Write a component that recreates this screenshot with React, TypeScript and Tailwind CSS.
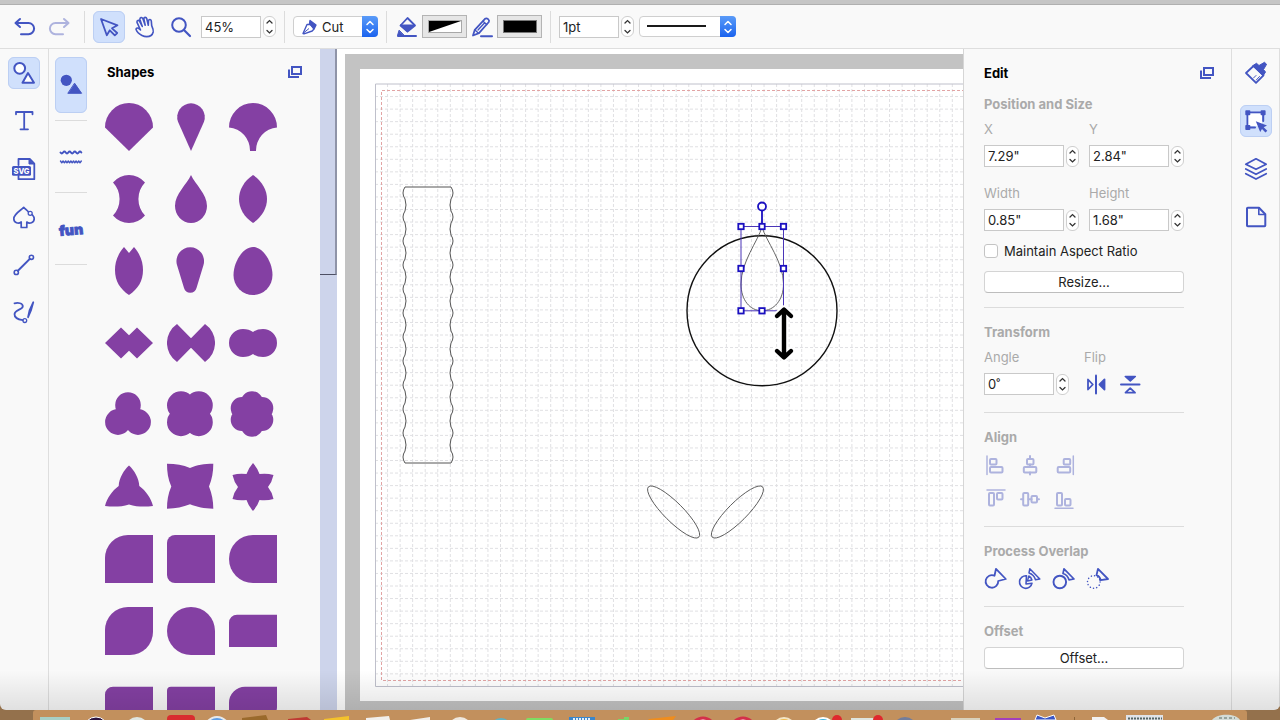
import type { ReactNode } from "react";
import { useState } from "react";

const CELL = 12.55;
const MAT = { x: 375, y: 84, bottom: 686.5, right: 1400 };

const verticals = Array.from({ length: 80 }, (_, i) => MAT.x + (i + 1) * CELL);
const horizontals = Array.from({ length: 47 }, (_, i) => MAT.y + (i + 1) * CELL);

// Joins several circles into one path: [cx, cy, r]
const circles = (list: number[][]) =>
  list.map(([cx, cy, r]) => `M${cx - r} ${cy}a${r} ${r} 0 1 1 ${2 * r} 0a${r} ${r} 0 1 1 ${-2 * r} 0Z`).join("");

const shapes: { name: string; d: string }[] = [
  { name: "Fan", d: "M0 24.5A24 24.5 0 0 1 48 24.5L24 48Z" },
  { name: "Cone", d: "M11 18.8A13.8 13.8 0 1 1 37 18.8L24 48Z" },
  { name: "Umbrella", d: "M0 24.5A24 24.5 0 0 1 48 24.5A23 23 0 0 0 27 48H21A23 23 0 0 0 0 24.5Z" },
  { name: "Spool", d: "M8 7.5A21 21 0 0 1 40 7.5A24 24 0 0 0 40 40.5A21 21 0 0 1 8 40.5A24 24 0 0 0 8 7.5Z" },
  { name: "Drop", d: "M24 0C28 9 40 19 40 31A16 17 0 0 1 8 31C8 19 20 9 24 0Z" },
  { name: "Leaf", d: "M24 0C33 6 38 15 38 24S33 42 24 48C15 42 10 33 10 24S15 6 24 0Z" },
  { name: "Petal", d: "M19 0L24 6L29 0C36 8 38 16 38 23C38 34 33 42 24 48C15 42 10 34 10 23C10 16 12 8 19 0Z" },
  { name: "Taper", d: "M10 18A13.8 13.8 0 1 1 36.5 18L29.5 41A6.5 6.5 0 0 1 17 41Z" },
  { name: "Egg", d: "M24 0C34 0 43.5 15 43.5 28A19.5 20 0 0 1 4.5 28C4.5 15 14 0 24 0Z" },
  { name: "Double diamond", d: "M0 24L16 8.5L24 16.3L32 8.5L48 24L32 39.5L24 31.7L16 39.5Z" },
  { name: "Bow", d: "M10 5L24 19.3L38 5A23 23 0 0 1 38 43L24 28.7L10 43A23 23 0 0 1 10 5Z" },
  { name: "Double circle", d: "M14 10Q20 10 24 13Q28 10 34 10A14 14 0 0 1 34 38Q28 38 24 35Q20 38 14 38A14 14 0 0 1 14 10Z" },
  { name: "Trefoil", d: circles([[23, 14, 12.8], [13, 31, 12.9], [33, 31, 12.9]]) },
  { name: "Quatrefoil", d: circles([[14, 14.3, 14], [31.8, 14.3, 14], [14, 31.2, 14], [31.8, 31.2, 14]]) },
  { name: "Flower", d: circles([[23, 11.4, 11.2], [23, 34.6, 11.2], [12.9, 17.2, 11.2], [33.1, 17.2, 11.2], [12.9, 28.8, 11.2], [33.1, 28.8, 11.2], [23, 23, 12]]) },
  { name: "Tri star", d: "M24 2.5C29 7 34 15 34.3 23C41 28 46 35 48 43C40 44 32 44 24 41.5C16 44 8 44 0 43C2 35 7 28 13.7 23C14 15 19 7 24 2.5Z" },
  { name: "Four star", d: "M0 .7C9 .7 16 2 23 5C30 2 37 .7 46.3 .7C46.3 9 45 16 42 23.5C45 31 46.3 38 46.3 45.7C37 45.7 30 44 23 41.3C16 44 9 45.7 0 45.7C0 38 1 31 4.3 23.5C1 16 0 9 0 .7Z" },
  { name: "Six star", d: "M24 0Q28.5 5 30.5 11Q38 10 44.5 12Q43 19 39 24Q43 29 44.5 36Q38 38 30.5 37Q28.5 43 24 48Q19.5 43 17.5 37Q10 38 3.5 36Q5 29 9 24Q5 19 3.5 12Q10 10 17.5 11Q19.5 5 24 0Z" },
  { name: "One round corner", d: "M0 48V23A23 23 0 0 1 23 0H48V48Z" },
  { name: "Two round corners", d: "M8 0H48V48H8A8 8 0 0 1 0 40V8A8 8 0 0 1 8 0Z" },
  { name: "Round side", d: "M24 0H48V48H24A24 24 0 0 1 24 0Z" },
  { name: "Round diagonal", d: "M0 48V23A23 23 0 0 1 23 0H48V25A23 23 0 0 1 25 48Z" },
  { name: "Three round corners", d: "M24 0A24 24 0 0 1 48 24V48H24A24 24 0 0 1 24 0Z" },
  { name: "Rectangle", d: "M8 7.7H48V40H0V15.7A8 8 0 0 1 8 7.7Z" },
  { name: "Wide round corner", d: "M8 7.7H48V40H0V15.7A8 8 0 0 1 8 7.7Z" },
  { name: "Wide small corner", d: "M4 7.7H48V40H0V11.7A4 4 0 0 1 4 7.7Z" },
  { name: "Wide large corner", d: "M16 7.7H48V28A12 12 0 0 1 36 40H0V23.7A16 16 0 0 1 16 7.7Z" },
];

// Wavy long edges of the strip, both ends bulge outwards
const waveDown = Array.from({ length: 23 }, (_, i) => `q${i % 2 === 0 ? -4 : 2} 6 0 12`).join("");
const waveUp = Array.from({ length: 23 }, (_, i) => `q${i % 2 === 0 ? 4 : -2} -6 0 -12`).join("");
const stripPath = `M405 187${waveDown}H451${waveUp}Z`;

const handles = [
  [741, 226.5], [762, 226.5], [783.5, 226.5],
  [741, 268.5], [783.5, 268.5],
  [741, 310.8], [762, 310.8],
];

const Icon = ({ w = 32, h = 32, children }: { w?: number; h?: number; children: ReactNode }) => (
  <svg
    width={w}
    height={h}
    viewBox={`0 0 ${w} ${h}`}
    fill="none"
    stroke="currentColor"
    strokeWidth="2"
    strokeLinecap="round"
    strokeLinejoin="round"
    aria-hidden="true"
  >
    {children}
  </svg>
);

const ToolButton = ({ label, active, faded, tall, children }: { label: string; active?: boolean; faded?: boolean; tall?: boolean; children: ReactNode }) => (
  <button
    aria-label={label}
    className={`flex w-8 shrink-0 items-center justify-center rounded-md ${tall ? "h-14" : "h-8"} ${
      active ? "bg-[#d0e0fc] outline outline-1 -outline-offset-1 outline-[#bccff3]" : ""
    } ${faded ? "text-[#aeb3de]" : "text-[#4355c2]"}`}
  >
    {children}
  </button>
);

const SmallButton = ({ label, faded, children }: { label: string; faded?: boolean; children: ReactNode }) => (
  <button aria-label={label} className={`h-6 w-6 ${faded ? "text-[#aeb3de]" : "text-[#4355c2]"}`}>
    <Icon w={24} h={24}>{children}</Icon>
  </button>
);

const Stepper = ({ label }: { label: string }) => (
  <div className="flex h-[21px] w-[13px] shrink-0 flex-col overflow-hidden rounded-md border border-[#cfcfcf] bg-white text-[#333]">
    {["M3 6L5.5 3.6L8 6", "M3 3.5L5.5 5.9L8 3.5"].map((d, i) => (
      <button key={d} aria-label={`${i ? "Decrease" : "Increase"} ${label}`} className="flex-1">
        <svg width="11" height="9" viewBox="0 0 11 9" fill="none" stroke="currentColor" strokeWidth="1.3" strokeLinecap="round">
          <path d={d} />
        </svg>
      </button>
    ))}
  </div>
);

const field = "h-[22px] min-w-0 border border-[#c9c9c9] bg-white px-[3px] text-[#222] outline-none";

const NumberField = ({ id, label, value }: { id: string; label: string; value: string }) => (
  <div className="w-[95px]">
    <label htmlFor={id} className="block text-[#aaa]">{label}</label>
    <div className="mt-[6px] flex items-center gap-[2px]">
      <input id={id} defaultValue={value} className={`${field} w-20`} />
      <Stepper label={label} />
    </div>
  </div>
);

const Chevrons = () => (
  <span className="pointer-events-none absolute inset-y-0 right-0 flex w-4 items-center justify-center rounded-r bg-gradient-to-b from-[#5a9bf8] to-[#1a62ee]">
    <svg width="10" height="16" viewBox="0 0 10 16" fill="none" stroke="white" strokeWidth="1.5" strokeLinecap="round" strokeLinejoin="round">
      <path d="M2 5.5L5 2.5L8 5.5M2 10.5L5 13.5L8 10.5" />
    </svg>
  </span>
);

const Divider = () => <div className="mx-2 h-8 w-px shrink-0 bg-[#dcdcdc]" />;

const PopOut = ({ label }: { label: string }) => (
  <button aria-label={label} className="text-[#4355c2]">
    <svg width="14" height="12" viewBox="0 0 14 12" fill="none" stroke="currentColor">
      <rect x="4" y="1" width="9" height="7" strokeWidth="2" />
      <path d="M1 3.5V11H11" strokeWidth="2" />
    </svg>
  </button>
);

const Toolbar = () => (
  <header className="flex h-11 shrink-0 items-center border-b border-[#dedede] bg-[#f9f9f9] pl-2">
    <div className="flex items-center gap-1">
      <ToolButton label="Undo">
        <Icon><path d="M12 8L7.5 12L12 16M8 12H20.5a5.6 5.6 0 0 1 0 11.2H13" /></Icon>
      </ToolButton>
      <ToolButton label="Redo" faded>
        <Icon><path d="M20 8L24.5 12L20 16M24 12H11.5a5.6 5.6 0 0 0 0 11.2H19" /></Icon>
      </ToolButton>
    </div>
    <Divider />
    <div className="flex items-center gap-1">
      <ToolButton label="Select" active>
        <Icon><path strokeWidth="1.8" d="M8 8L24.5 14.3L19 17.3L24.2 22L21.8 24.4L16.8 19.3L13.8 24.3Z" /></Icon>
      </ToolButton>
      <ToolButton label="Pan">
        <Icon>
          <path strokeWidth="1.6" d="M13 24.5C10 23 7.7 20.5 7 18.3C7 16.8 8.8 16.6 10 17.6L11.5 19L8 11.3C7.6 9.5 9.8 8.7 10.6 10.3L13.3 15.5L10.9 8.4C10.7 6.4 13 5.9 13.8 7.6L16.2 14.2L14.8 7.7C15 5.9 17.3 6 17.8 7.7L19.3 14.3L19.5 9.5C20 7.9 22.1 8.2 22.3 9.9L22.7 14.6C24 17.5 24.6 19 24.2 21C23.4 24.2 20.6 25.6 17.8 25.6C16 25.6 14.4 25.2 13 24.5Z" />
        </Icon>
      </ToolButton>
      <ToolButton label="Zoom">
        <Icon><circle cx="14" cy="14" r="6.8" /><path d="M19 19L25 25" strokeWidth="2.2" /></Icon>
      </ToolButton>
      <div className="flex items-center gap-[2px]">
        <input aria-label="Zoom level" defaultValue="45%" className={`${field} w-[60px]`} />
        <Stepper label="zoom" />
      </div>
    </div>
    <Divider />
    <div className="relative h-[21px] w-[85px]">
      <select aria-label="Operation" className="h-full w-full appearance-none rounded border border-[#cfcfcf] bg-white pl-7 text-[#222] outline-none">
        <option>Cut</option>
        <option>Draw</option>
      </select>
      <svg width="18" height="18" viewBox="0 0 18 18" fill="none" stroke="#4355c2" strokeWidth="1.4" strokeLinejoin="round" className="pointer-events-none absolute left-2 top-[2px]">
        <path d="M2 15.5L6 6.5H9.5L13 11L11.2 13L3 15.8Z" />
        <path d="M2.5 15L8 10.5" strokeWidth="1" />
        <path d="M9 2.5L15 7L13.2 10.6L8.5 5.5Z" fill="#4355c2" />
      </svg>
      <Chevrons />
    </div>
    <Divider />
    <div className="flex items-center gap-[3px]">
      <button aria-label="Fill colour" className="h-6 w-6 text-[#4355c2]">
        <Icon w={24} h={24}>
          <path d="M12.5 3L20 10.5L12.5 16.5L5.5 10.5Z" strokeWidth="1.8" />
          <path d="M5.5 10H20L12.5 16.5Z" fill="currentColor" strokeWidth="1" />
          <path d="M3 21H21" /><path d="M4 15.5L2.5 20.5H9Z" fill="currentColor" strokeWidth="1" />
        </Icon>
      </button>
      <button aria-label="Fill swatch" className="flex h-[23px] w-[45px] items-center justify-center border border-[#b4b4b4] bg-[#e6e6e6]">
        <svg width="34" height="13" viewBox="0 0 34 13">
          <rect width="34" height="13" fill="#a8a8a8" /><path d="M1 1H33V12H1Z" fill="white" /><path d="M1 12V1H33Z" fill="black" />
        </svg>
      </button>
      <button aria-label="Line colour" className="h-6 w-6 text-[#4355c2]">
        <Icon w={24} h={24}>
          <path d="M3 20.5L4.8 14.8L15 3.8C17 2.5 20 5 18.8 7L9 18.2Z" strokeWidth="1.8" />
          <path d="M5 15L8.5 18.3M13 6.2L16.8 9.5M8 15L14 8.5" strokeWidth="1.3" /><path d="M11 21.2H22" />
        </Icon>
      </button>
      <button aria-label="Line swatch" className="flex h-[23px] w-[45px] items-center justify-center border border-[#b4b4b4] bg-[#e6e6e6]">
        <span className="h-[13px] w-[34px] border border-[#777] bg-black" />
      </button>
    </div>
    <Divider />
    <div className="flex items-center gap-[2px]">
      <input aria-label="Line width" defaultValue="1pt" className={`${field} w-[60px]`} />
      <Stepper label="line width" />
    </div>
    <div className="relative ml-[5px] h-[21px] w-[97px]">
      <select aria-label="Line style" className="h-full w-full appearance-none rounded border border-[#cfcfcf] bg-white outline-none">
        <option value="solid" />
      </select>
      <span className="pointer-events-none absolute left-2 top-[9px] h-[2px] w-[59px] bg-[#1a1a1a]" />
      <Chevrons />
    </div>
  </header>
);

const LeftTools = () => (
  <nav aria-label="Tools" className="flex w-[49px] shrink-0 flex-col items-center gap-4 border-r border-[#dedede] pt-2">
    <ToolButton label="Shapes" active>
      <Icon><circle cx="11.7" cy="11.3" r="5.4" fill="white" /><path d="M20 16L26 25.7H14.5Z" fill="white" /></Icon>
    </ToolButton>
    <ToolButton label="Text">
      <Icon><path strokeWidth="1.8" d="M8 9.3V7H24.5V9.3M16.2 7V24.3M12.5 24.3H20" /></Icon>
    </ToolButton>
    <ToolButton label="SVG import">
      <Icon>
        <path strokeWidth="1.8" d="M10.5 12V6H22L26.3 10.5V26.2H10.5V23" /><path d="M21 6.5V11H26Z" fill="currentColor" strokeWidth="1" />
        <rect x="4" y="13" width="19" height="9.7" rx="1.5" fill="currentColor" stroke="none" />
        <text x="13.5" y="20.6" textAnchor="middle" fontSize="7.5" fontWeight="800" fill="white" stroke="none">SVG</text>
      </Icon>
    </ToolButton>
    <ToolButton label="Edit points">
      <Icon>
        <path d="M20.2 10.7C18.5 9 17 7.7 15.7 6.3C13 9.6 5.8 12.5 5.8 17.8C5.8 21.7 10.5 23.2 13.2 21V26.5H18.8V21C21.5 23.2 26.2 21.7 26.2 17.8C26.2 16.3 25.4 15 24.3 13.8" strokeWidth="1.7" />
        <circle cx="22.2" cy="12.3" r="2" strokeWidth="1.3" />
      </Icon>
    </ToolButton>
    <ToolButton label="Line">
      <Icon><circle cx="23.4" cy="8.3" r="2.1" strokeWidth="1.6" /><circle cx="8.3" cy="23.4" r="2.1" strokeWidth="1.6" /><path d="M21.8 9.9L9.9 21.8" /></Icon>
    </ToolButton>
    <ToolButton label="Freehand">
      <Icon>
        <path strokeWidth="1.8" d="M6.5 6.3C10 5.5 14.8 6 14.8 9.2C14.8 12.8 7 12.5 6.5 17C6.3 21.5 11 22.6 14.8 23.2" />
        <circle cx="16.8" cy="23.6" r="1.9" strokeWidth="1.3" />
        <path d="M25.3 5.2L23 13.5L20 20.3L21.6 13Z" strokeWidth="1.7" fill="currentColor" />
      </Icon>
    </ToolButton>
  </nav>
);

const ShapeCategories = () => (
  <nav aria-label="Shape categories" className="flex shrink-0 flex-col pl-[6px] pt-2">
    <ToolButton label="Basic shapes" active tall>
      <Icon h={56}>
        <circle cx="11.3" cy="23.3" r="5.6" fill="currentColor" stroke="none" />
        <path d="M19.8 26.5L26.6 36.3H13.2Z" fill="currentColor" strokeWidth="1" />
      </Icon>
    </ToolButton>
    <div className="mb-2 mt-[7px] h-px bg-[#dcdcdc]" />
    <ToolButton label="Borders" tall>
      <Icon h={56}>
        <path strokeWidth="2" d="M5.5 23.5q1.3 1.8 2.6 0t2.6 0t2.6 0t2.6 0t2.6 0t2.6 0t2.6 0t2.6 0" />
        <path strokeWidth="1.4" d="M5.5 32l1.3 1.8l1.3-1.8l1.3 1.8l1.3-1.8l1.3 1.8l1.3-1.8l1.3 1.8l1.3-1.8l1.3 1.8l1.3-1.8l1.3 1.8l1.3-1.8l1.3 1.8l1.3-1.8l1.3 1.8l1.3-1.8" />
      </Icon>
    </ToolButton>
    <div className="mb-2 mt-[7px] h-px bg-[#dcdcdc]" />
    <ToolButton label="Fun shapes" tall>
      <svg width="32" height="56" viewBox="0 0 32 56" fill="currentColor" stroke="currentColor" strokeWidth=".8">
        <text x="16" y="34" textAnchor="middle" fontSize="14" fontWeight="900" transform="rotate(-5 16 29)">fun</text>
      </svg>
    </ToolButton>
    <div className="mt-[7px] h-px bg-[#dcdcdc]" />
  </nav>
);

const ShapesPanel = () => (
  <section className="flex w-[233px] shrink-0 flex-col overflow-hidden pl-[18px] pt-[13px]">
    <div className="flex items-center justify-between pl-[2px] pr-[18px]">
      <h2 className="font-bold text-black">Shapes</h2>
      <PopOut label="Detach shapes panel" />
    </div>
    <div className="mt-[21px] grid w-[172px] grid-cols-3 gap-x-[14px] gap-y-6">
      {shapes.map((s) => (
        <button key={s.name} aria-label={s.name} className="h-12 w-12">
          <svg width="48" height="48" viewBox="0 0 48 48" fill="#8440a3"><path d={s.d} /></svg>
        </button>
      ))}
    </div>
  </section>
);

const Canvas = () => (
  <main className="flex min-w-0 flex-1 flex-col overflow-hidden bg-white pl-2 pt-[5px]">
    <div className="flex-1 bg-[#c3c3c3] pb-[9px] pl-[15px] pt-[15px]">
      <div className="bg-white">
        <svg className="block h-[632px] w-full" fill="none">
          <g transform="translate(-360 -69)">
            <g stroke="#e0e0e3" strokeDasharray="3 2">
              {verticals.map((x) => <path key={x} d={`M${x} ${MAT.y}V${MAT.bottom}`} />)}
              {horizontals.map((y) => <path key={y} d={`M${MAT.x} ${y}H${MAT.right}`} />)}
            </g>
            <path d={`M${MAT.right} 84H375.5V${MAT.bottom}H${MAT.right}`} stroke="#bfc0cb" />
            <path d={`M${MAT.right} 90.5H381.5V680.5H${MAT.right}`} stroke="#e2a4a4" strokeDasharray="3 2" />

            <path d={stripPath} stroke="#555" />
            <g stroke="#555" strokeWidth="0.9">
              <ellipse cx="673.6" cy="512" rx="35.6" ry="9.5" transform="rotate(45 673.6 512)" />
              <ellipse cx="737.4" cy="512" rx="35.6" ry="9.5" transform="rotate(-45 737.4 512)" />
            </g>
            <circle cx="762" cy="310.8" r="75" stroke="#111" strokeWidth="1.4" />
            <path d="M762 227C766 241 783.5 262 783.5 284C783.5 300 774 310.8 762 310.8S741 300 741 284C741 262 758 241 762 227Z" stroke="#555" strokeWidth="0.9" />

            {/* selection box */}
            <rect x="741" y="226.5" width="42.5" height="84.3" stroke="#4a35b8" />
            <path d="M762 226.5V210" stroke="#1a0fc0" strokeWidth="1.8" />
            <circle cx="762" cy="206.5" r="4" fill="white" stroke="#1a0fc0" strokeWidth="1.8" />
            {handles.map(([x, y]) => (
              <rect key={`${x}-${y}`} x={x - 2.7} y={y - 2.7} width="5.4" height="5.4" fill="white" stroke="#1a0fc0" strokeWidth="1.8" />
            ))}

            {/* resize cursor */}
            <g strokeLinecap="round" strokeLinejoin="round">
              <path d="M784 310.5V356.5M777 316L784 309.5L791 316M777 351L784 357.5L791 351" stroke="white" strokeWidth="8" />
              <path d="M784 310.5V356.5M777 316L784 309.5L791 316M777 351L784 357.5L791 351" stroke="black" strokeWidth="4.4" />
            </g>
          </g>
        </svg>
      </div>
    </div>
  </main>
);

const heading = "font-bold text-[#aaa]";
const wideButton = "block h-[22px] w-full rounded-[4px] border border-[#d4d4d4] border-b-[#bdbdbd] bg-white leading-5 text-[#222]";

const EditPanel = () => {
  const [keepRatio, setKeepRatio] = useState(false);

  return (
    <aside className="w-[268px] shrink-0 border-l border-[#d6d6d6] pl-5 pt-[14px]">
      <div className="flex items-center justify-between pr-[17px]">
        <h2 className="font-bold text-black">Edit</h2>
        <PopOut label="Detach edit panel" />
      </div>
      <div className="w-[200px] divide-y divide-[#dcdcdc]">
        <section className="pb-[14px] pt-[11px]">
          <h3 className={heading}>Position and Size</h3>
          <div className="mt-[5px] grid grid-cols-2 gap-x-[10px] gap-y-4">
            <NumberField id="pos-x" label="X" value={'7.29"'} />
            <NumberField id="pos-y" label="Y" value={'2.84"'} />
            <NumberField id="width" label="Width" value={'0.85"'} />
            <NumberField id="height" label="Height" value={'1.68"'} />
          </div>
          <label className="mt-[10px] flex items-center gap-[6px] text-[#222]">
            <input
              type="checkbox"
              checked={keepRatio}
              onChange={(e) => setKeepRatio(e.target.checked)}
              className="h-[14px] w-[14px] appearance-none rounded-[3px] border border-[#c4c4c4] bg-white checked:bg-[#4355c2]"
            />
            Maintain Aspect Ratio
          </label>
          <button className={`${wideButton} mt-[10px]`}>Resize...</button>
        </section>

        <section className="pb-4 pt-[14px]">
          <h3 className={heading}>Transform</h3>
          <div className="mt-[5px] flex gap-[15px]">
            <div>
              <label htmlFor="angle" className="block text-[#aaa]">Angle</label>
              <div className="mt-[6px] flex items-center gap-[2px]">
                <input id="angle" defaultValue="0˚" className={`${field} w-[70px]`} />
                <Stepper label="angle" />
              </div>
            </div>
            <div>
              <div className="text-[#aaa]">Flip</div>
              <div className="mt-[5px] flex gap-[10px]">
                <SmallButton label="Flip horizontally">
                  <path d="M12 3.5V21.5" /><path d="M4 7.5V17.5L8.8 12.5Z" strokeWidth="1.8" /><path d="M20.5 7.5V17.5L15.5 12.5Z" fill="currentColor" strokeWidth="1.8" />
                </SmallButton>
                <SmallButton label="Flip vertically">
                  <path d="M3 12.5H21.5" /><path d="M7.3 4.5H17.3L12.3 9Z" fill="currentColor" strokeWidth="1.6" /><path d="M7.5 20.7H17L12.2 16.2Z" strokeWidth="1.8" />
                </SmallButton>
              </div>
            </div>
          </div>
        </section>

        <section className="pb-[15px] pt-[14px]">
          <h3 className={heading}>Align</h3>
          <div className="mt-[6px] flex flex-col gap-[10px]">
            <div className="flex gap-[10px]">
              <SmallButton label="Align left" faded>
                <path d="M3 3V21.5" strokeWidth="1.5" /><rect x="6" y="6" width="6.5" height="5.5" rx="1" /><rect x="6" y="14" width="12.5" height="5.5" rx="1" />
              </SmallButton>
              <SmallButton label="Align centre" faded>
                <path d="M12 3V6M12 11.5V14M12 19.5V21.5" /><rect x="9" y="6" width="6.5" height="5.5" rx="1" /><rect x="5.8" y="14" width="12.5" height="5.5" rx="1" />
              </SmallButton>
              <SmallButton label="Align right" faded>
                <path d="M21.3 3V21.5" strokeWidth="1.5" /><rect x="11.7" y="6" width="6.5" height="5.5" rx="1" /><rect x="5.7" y="14" width="12.5" height="5.5" rx="1" />
              </SmallButton>
            </div>
            <div className="flex gap-[10px]">
              <SmallButton label="Align top" faded>
                <path d="M3 3H21" strokeWidth="1.5" /><rect x="5" y="6" width="5" height="12.5" rx="1" /><rect x="13" y="6" width="5.5" height="6.5" rx="1" />
              </SmallButton>
              <SmallButton label="Align middle" faded>
                <path d="M3 12.2H5M10.5 12.2H13.5M19 12.2H21" /><rect x="5.2" y="6" width="5" height="12.5" rx="1" /><rect x="13.5" y="9" width="5.5" height="6.5" rx="1" />
              </SmallButton>
              <SmallButton label="Align bottom" faded>
                <path d="M3 21.3H21" strokeWidth="1.5" /><rect x="5" y="6" width="5" height="12.5" rx="1" /><rect x="13" y="12" width="5.5" height="6.5" rx="1" />
              </SmallButton>
            </div>
          </div>
        </section>

        <section className="pb-[15px] pt-[14px]">
          <h3 className={heading}>Process Overlap</h3>
          <div className="mt-[6px] flex gap-[10px]">
            <SmallButton label="Weld">
              <path d="M10.5 8.7L12 1.8L21.8 12L14.2 14A6.3 6.3 0 1 1 10.5 8.7Z" strokeWidth="1.8" />
            </SmallButton>
            <SmallButton label="Overlap">
              <path d="M11.8 1.8L21.8 12L17.5 12.8C16.5 9.5 14 7 11 6Z" strokeWidth="1.5" />
              <path d="M8.5 8.8A6.3 6.3 0 1 0 14 16.2L8 17Z" strokeWidth="1.6" />
              <path d="M10.8 9L9.5 14L14 13C13.5 11.2 12.5 9.8 10.8 9Z" strokeWidth="1.4" />
            </SmallButton>
            <SmallButton label="Subtract">
              <circle cx="7.8" cy="15" r="6.3" strokeWidth="1.9" />
              <path d="M12 1.8L22 12L17 12.8C16.2 10 14 7.4 11 6.5Z" strokeWidth="1.7" />
            </SmallButton>
            <SmallButton label="Divide">
              <circle cx="7.8" cy="15" r="6.3" strokeWidth="1.5" strokeDasharray="0.1 3.2" />
              <path d="M12 1.8L22 12L14.8 13.2C14.2 11 12.8 9 10.5 8.2Z" strokeWidth="1.8" />
            </SmallButton>
          </div>
        </section>

        <section className="pt-[14px]">
          <h3 className={heading}>Offset</h3>
          <button className={`${wideButton} mt-[6px]`}>Offset...</button>
        </section>
      </div>
    </aside>
  );
};

const RightTools = () => (
  <nav aria-label="Panels" className="flex w-[49px] shrink-0 flex-col items-center gap-4 border-x border-[#dedede] pt-2">
    <ToolButton label="Appearance">
      <Icon>
        <path d="M13.5 9L23.5 18.3L16 25.8L6 16Z" strokeWidth="1.8" />
        <path d="M13 8.5L16.5 6.3L19 8.5L24.5 5.3L26.6 7.3L23.5 12.5L25.5 15L23.3 18.5Z" fill="currentColor" strokeWidth="1" />
        <path d="M13.5 21L16 18.5M16.3 23L19.5 19.5" strokeWidth="1" />
      </Icon>
    </ToolButton>
    <ToolButton label="Edit" active>
      <Icon>
        <path d="M7.5 7.5H23.2V16M7.5 7.5V22.5H15" />
        <path d="M8.5 8.5H22V21H8.5Z" fill="white" stroke="none" />
        <g fill="currentColor" stroke="none">
          <rect x="5.3" y="5.3" width="5" height="5" rx=".8" /><rect x="20.6" y="5.3" width="5" height="5" rx=".8" /><rect x="5.3" y="20" width="5" height="5" rx=".8" />
          <path d="M15.8 16.3L27 20.5L23.7 22.3L27.3 25.8L25.5 27.5L22 24L20.2 27Z" />
        </g>
      </Icon>
    </ToolButton>
    <ToolButton label="Layers">
      <Icon><path strokeWidth="1.8" d="M16 5.8L26.2 11.2L16 16.3L5.8 11.2ZM5.8 16L16 21.3L26.2 16M5.8 20.7L16 26L26.2 20.7" /></Icon>
    </ToolButton>
    <ToolButton label="Document">
      <Icon><path d="M7 7.5Q7 6.8 7.8 6.8H19L25.3 13.3V24.5Q25.3 25.3 24.5 25.3H7.8Q7 25.3 7 24.5Z" /><path d="M18.8 7V13.5H25" strokeWidth="1.6" /></Icon>
    </ToolButton>
  </nav>
);

// Tops of the app icons that stick up at the bottom edge of the screen
const Dock = () => (
  <footer className="flex h-[10px] shrink-0 bg-[#94714c] px-[33px]">
    <svg className="h-full w-full rounded-t-[3px] bg-[#c2905d]">
      <g transform="translate(-33 -710)">
        <path d="M40 717H70V720H40Z" fill="#a7cfc6" />
        <circle cx="96" cy="729" r="12" fill="#2a1440" stroke="white" strokeWidth="1" />
        <circle cx="137" cy="729" r="12" fill="#dfe6e2" />
        <rect x="167" y="715" width="28" height="8" rx="4" fill="#d92c2f" />
        <circle cx="217" cy="729" r="12" fill="#5d9de6" stroke="#e8e8e8" strokeWidth="2" />
        <path d="M242 718L266 715L268 720H242Z" fill="#9a6a2c" />
        <path d="M288 719L307 717L311 720H288Z" fill="#bf3a33" />
        <path d="M324 719L349 716V720H324Z" fill="#f4c22b" />
        <path d="M366 718L389 716L390 720H366ZM410 720L430 717V720Z" fill="#f1efec" />
        <circle cx="460" cy="729" r="12" fill="#efe8df" />
        <circle cx="501" cy="729" r="11" fill="#62b3c4" />
        <rect x="526" y="718" width="27" height="6" rx="2" fill="#7fdd62" />
        <rect x="569" y="717" width="26" height="6" fill="#3a86cb" /><path d="M573 719H591" stroke="#e6f0f8" strokeWidth="2" strokeDasharray="2 1" />
        <path d="M624 717H629V720H618V719H624Z" fill="#78d668" />
        <path d="M649 719L676 716L673 720H648Z" fill="#f08d1d" />
        <circle cx="703" cy="730" r="12" fill="white" stroke="#d4304a" strokeWidth="3" />
        <circle cx="743" cy="730" r="12" fill="white" stroke="#d4304a" strokeWidth="3" />
        <circle cx="784" cy="729" r="11" fill="#f0b94c" stroke="#f3e5c5" strokeWidth="2" />
        <circle cx="823" cy="729" r="11" fill="#3cb2dd" stroke="white" strokeWidth="2" />
        <path d="M851 718H874V720H851Z" fill="#dfe5df" />
        <circle cx="837" cy="720" r="5" fill="#e0282d" /><circle cx="878" cy="720" r="5" fill="#e0282d" />
        <circle cx="905" cy="729" r="12" fill="#727d9c" />
        <path d="M951 718H980V720H951Z" fill="#d9d2bd" />
        <path d="M995 718H1021V720H995Z" fill="#a33fbb" />
        <path d="M1035 720L1037 715L1045 718L1054 715L1056 720Z" fill="#3a55c5" stroke="white" strokeWidth="1" />
        <path d="M1074.5 717V720" stroke="#8e6639" />
        <path d="M1092 717H1104L1108 720H1092Z" fill="#f2f2f2" />
        <path d="M1126 715H1163V720H1126Z" fill="#dfe3e8" /><path d="M1128 718.5H1162" stroke="#566" strokeWidth="2" strokeDasharray="2 1" />
        <path d="M1212 720C1217 713 1236 713 1240 720Z" fill="#d3dbd6" /><path d="M1219 718H1235" stroke="#5b6a63" strokeDasharray="3 2" />
      </g>
    </svg>
  </footer>
);

export default function App() {
  return (
    <div className="flex h-screen flex-col overflow-hidden bg-[#94714c] font-['Inter',sans-serif] text-[13px] leading-5">
      <div className="h-[5px] shrink-0 border-b border-[#b0b0b0] bg-[#c6c6c6]" />
      <div className="relative flex min-h-0 flex-1 flex-col overflow-hidden rounded-b-md bg-[#f9f9f9]">
        <Toolbar />
        <div className="flex min-h-0 flex-1">
          <LeftTools />
          <ShapeCategories />
          <ShapesPanel />
          {/* panel scrollbar */}
          <div className="w-[17px] shrink-0 bg-[#cdd4eb]">
            <div className="h-[226px] border-b border-r-2 border-b-[#4d4f63] border-r-[#8f94a8]" />
          </div>
          <Canvas />
          <EditPanel />
          <RightTools />
        </div>
        <div className="pointer-events-none absolute inset-x-0 bottom-0 h-10 bg-gradient-to-b from-transparent to-black/10" />
      </div>
      <Dock />
    </div>
  );
}
